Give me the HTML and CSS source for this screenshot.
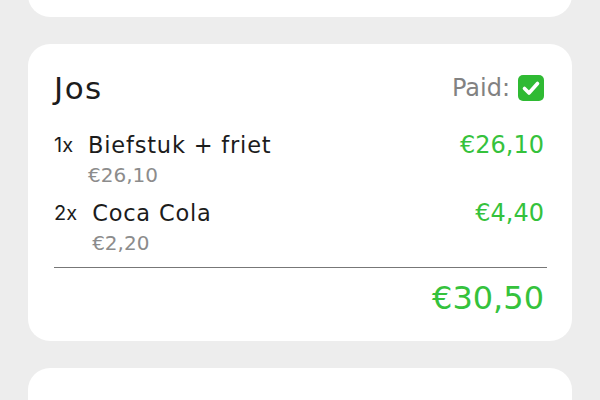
FILE: index.html
```html
<!DOCTYPE html>
<html lang="nl">
<head>
<meta charset="utf-8">
<title>Orders</title>
<link rel="stylesheet" href="styles.css">
</head>
<body>
<div class="list">
  <div class="card card-prev"></div>
  <div class="card">
    <div class="head">
      <span class="person">Jos</span>
      <span class="paid">Paid:
        <span class="check">
          <svg viewBox="0 0 26 26" width="26" height="26"><rect x="0" y="0" width="26" height="26" rx="5" fill="#2fba33"/><path d="M6.5 13.5 L11 18 L19.5 8.5" fill="none" stroke="#fff" stroke-width="3.6" stroke-linecap="round" stroke-linejoin="round"/></svg>
        </span>
      </span>
    </div>
    <div class="item">
      <span class="qty">1x</span>
      <div class="desc">
        <div class="iname">Biefstuk + friet</div>
        <div class="unit">€26,10</div>
      </div>
      <span class="price">€26,10</span>
    </div>
    <div class="item item-next">
      <span class="qty">2x</span>
      <div class="desc">
        <div class="iname">Coca Cola</div>
        <div class="unit">€2,20</div>
      </div>
      <span class="price">€4,40</span>
    </div>
    <div class="divider"></div>
    <div class="total">€30,50</div>
  </div>
  <div class="card">
    <div class="head">
      <span class="person">Mark</span>
    </div>
  </div>
</div>
</body>
</html>
```

FILE: styles.css
```css
html, body {
  margin: 0;
  padding: 0;
  background: #ededed;
  height: 100%;
  overflow: hidden;
}
body {
  font-family: "DejaVu Sans", "Noto Sans", sans-serif;
  color: #1c1c1c;
}
.list {
  display: flex;
  flex-direction: column;
  gap: 27px;
  padding: 0 28px;
  margin-top: -83px;
}
.card {
  background: #ffffff;
  border-radius: 22px;
  padding: 22px 28px 21px 26px;
}
.card-prev {
  height: 100px;
  padding: 0;
}
.head {
  display: flex;
  align-items: center;
  justify-content: space-between;
  height: 44px;
}
.person {
  font-size: 31px;
  line-height: 40px;
  letter-spacing: 1.5px;
}
.paid {
  display: flex;
  align-items: center;
  gap: 8px;
  font-size: 24px;
  color: #828282;
}
.check {
  display: flex;
  width: 26px;
  height: 26px;
}
.item {
  display: flex;
  align-items: flex-start;
  margin-top: 20px;
}
.item-next {
  margin-top: 7px;
}
.qty {
  font-family: "Inter", "DejaVu Sans", sans-serif;
  font-size: 20px;
  line-height: 30px;
  margin-right: 15px;
}
.desc {
  display: flex;
  flex-direction: column;
}
.iname {
  font-size: 22.5px;
  line-height: 30px;
  letter-spacing: 0.8px;
}
.unit {
  font-size: 20px;
  line-height: 31px;
  color: #8c8c8c;
}
.price {
  margin-left: auto;
  font-size: 24px;
  line-height: 30px;
  color: #35c23c;
}
.divider {
  height: 1px;
  background: #777777;
  margin-top: 8px;
  margin-right: -3px;
}
.total {
  margin-top: 8px;
  text-align: right;
  font-size: 32px;
  line-height: 44px;
  color: #35c23c;
}
```
